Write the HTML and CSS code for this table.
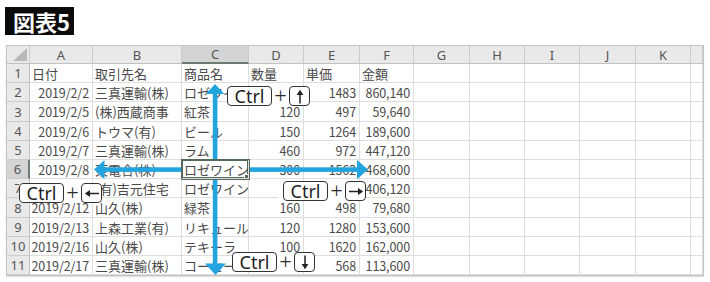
FILE: index.html
```html
<!DOCTYPE html>
<html lang="ja">
<head>
<meta charset="utf-8">
<link rel="stylesheet" href="styles.css">
</head>
<body>
<div class="stage">
  <div class="title">図表5</div>
  <div class="sheet">
    <div class="corner"></div>
    <div class="ch">A</div><div class="ch">B</div><div class="ch selc">C</div><div class="ch">D</div><div class="ch">E</div><div class="ch">F</div><div class="ch">G</div><div class="ch">H</div><div class="ch">I</div><div class="ch">J</div><div class="ch">K</div><div class="ch"></div>

    <div class="rh">1</div><div class="c">日付</div><div class="c">取引先名</div><div class="c">商品名</div><div class="c">数量</div><div class="c">単価</div><div class="c">金額</div><div class="c"></div><div class="c"></div><div class="c"></div><div class="c"></div><div class="c"></div><div class="c"></div>

    <div class="rh">2</div><div class="c n">2019/2/2</div><div class="c">三真運輸(株)</div><div class="c">ロゼワイン</div><div class="c n">580</div><div class="c n">1483</div><div class="c n">860,140</div><div class="c"></div><div class="c"></div><div class="c"></div><div class="c"></div><div class="c"></div><div class="c"></div>

    <div class="rh">3</div><div class="c n">2019/2/5</div><div class="c">(株)西蔵商事</div><div class="c">紅茶</div><div class="c n">120</div><div class="c n">497</div><div class="c n">59,640</div><div class="c"></div><div class="c"></div><div class="c"></div><div class="c"></div><div class="c"></div><div class="c"></div>

    <div class="rh">4</div><div class="c n">2019/2/6</div><div class="c">トウマ(有)</div><div class="c">ビール</div><div class="c n">150</div><div class="c n">1264</div><div class="c n">189,600</div><div class="c"></div><div class="c"></div><div class="c"></div><div class="c"></div><div class="c"></div><div class="c"></div>

    <div class="rh">5</div><div class="c n">2019/2/7</div><div class="c">三真運輸(株)</div><div class="c">ラム</div><div class="c n">460</div><div class="c n">972</div><div class="c n">447,120</div><div class="c"></div><div class="c"></div><div class="c"></div><div class="c"></div><div class="c"></div><div class="c"></div>

    <div class="rh selr">6</div><div class="c n">2019/2/8</div><div class="c">東電合(株)</div><div class="c sel">ロゼワイン</div><div class="c n">300</div><div class="c n">1562</div><div class="c n">468,600</div><div class="c"></div><div class="c"></div><div class="c"></div><div class="c"></div><div class="c"></div><div class="c"></div>

    <div class="rh">7</div><div class="c n">2019/2/9</div><div class="c">(有)吉元住宅</div><div class="c">ロゼワイン</div><div class="c n">520</div><div class="c n">781</div><div class="c n">406,120</div><div class="c"></div><div class="c"></div><div class="c"></div><div class="c"></div><div class="c"></div><div class="c"></div>

    <div class="rh">8</div><div class="c n">2019/2/12</div><div class="c">山久(株)</div><div class="c">緑茶</div><div class="c n">160</div><div class="c n">498</div><div class="c n">79,680</div><div class="c"></div><div class="c"></div><div class="c"></div><div class="c"></div><div class="c"></div><div class="c"></div>

    <div class="rh">9</div><div class="c n">2019/2/13</div><div class="c">上森工業(有)</div><div class="c">リキュール</div><div class="c n">120</div><div class="c n">1280</div><div class="c n">153,600</div><div class="c"></div><div class="c"></div><div class="c"></div><div class="c"></div><div class="c"></div><div class="c"></div>

    <div class="rh">10</div><div class="c n">2019/2/16</div><div class="c">山久(株)</div><div class="c">テキーラ</div><div class="c n">100</div><div class="c n">1620</div><div class="c n">162,000</div><div class="c"></div><div class="c"></div><div class="c"></div><div class="c"></div><div class="c"></div><div class="c"></div>

    <div class="rh">11</div><div class="c n">2019/2/17</div><div class="c">三真運輸(株)</div><div class="c">コーヒー</div><div class="c n">200</div><div class="c n">568</div><div class="c n">113,600</div><div class="c"></div><div class="c"></div><div class="c"></div><div class="c"></div><div class="c"></div><div class="c"></div>
  </div>

  <svg class="arrows" width="710" height="282" viewBox="0 0 710 282">
    <g fill="#22a5de">
      <rect x="212.8" y="92" width="4.6" height="67"/>
      <polygon points="215.1,84 224.3,94 205.9,94"/>
      <rect x="212.8" y="179" width="4.6" height="86"/>
      <polygon points="205,263.5 226,263.5 215.5,275"/>
      <rect x="103" y="167.3" width="78" height="4.6"/>
      <polygon points="94,169.6 104.5,160 104.5,179.2"/>
      <rect x="249" y="167.3" width="109" height="4.6"/>
      <polygon points="368,169.6 357,160 357,179.2"/>
    </g>
  </svg>

  <div class="key k-up">
    <div class="ctrl">Ctrl</div><div class="plus">+</div>
    <div class="ak"><svg width="18" height="17" viewBox="0 0 18 17"><path d="M9 5.5V15.5" stroke="#222" stroke-width="1.5"/><path d="M9 1.8L12.4 7H5.6Z" fill="#222"/></svg></div>
  </div>
  <div class="key k-left">
    <div class="ctrl">Ctrl</div><div class="plus">+</div>
    <div class="ak"><svg width="18" height="17" viewBox="0 0 18 17"><path d="M6 8.5H16" stroke="#222" stroke-width="1.5"/><path d="M1.8 8.5L7 5.1V11.9Z" fill="#222"/></svg></div>
  </div>
  <div class="key k-right">
    <div class="ctrl">Ctrl</div><div class="plus">+</div>
    <div class="ak"><svg width="18" height="17" viewBox="0 0 18 17"><path d="M2 8.5H12" stroke="#222" stroke-width="1.5"/><path d="M16.2 8.5L11 5.1V11.9Z" fill="#222"/></svg></div>
  </div>
  <div class="key k-down">
    <div class="ctrl">Ctrl</div><div class="plus">+</div>
    <div class="ak"><svg width="18" height="17" viewBox="0 0 18 17"><path d="M9 1.5V11.5" stroke="#222" stroke-width="1.5"/><path d="M9 15.2L12.4 10H5.6Z" fill="#222"/></svg></div>
  </div>
</div>
</body>
</html>
```

FILE: styles.css
```css
* { box-sizing: border-box; }
body {
  margin: 0;
  background: #fff;
  font-family: "Noto Sans CJK JP", "Noto Sans", sans-serif;
}
.stage {
  position: relative;
  width: 710px;
  height: 282px;
  overflow: hidden;
  background: #fff;
}
.title {
  margin: 7px 0 0 5px;
  width: 69px;
  height: 28px;
  background: #0b0b0b;
  color: #fff;
  font-weight: 700;
  font-size: 22px;
  line-height: 28px;
  padding-left: 8px;
}
.sheet {
  margin: 10px 0 0 6px;
  width: 698px;
  display: grid;
  grid-template-columns: 23px 63px 89px 67px 55px 56px 54px 56px 55px 55px 56px 55px 12px;
  grid-template-rows: 18px 19px 19px 20px 19px 19px 19px 19px 20px 19px 19px 19px;
  border: 1px solid #c4c4c4;
  box-shadow: 0 1px 1px rgba(0,0,0,0.12);
  font-size: 13px;
  color: #4a4a4a;
}
.c, .ch, .rh, .corner {
  border-right: 1px solid #dedede;
  border-bottom: 1px solid #dedede;
  white-space: nowrap;
  overflow: hidden;
  display: flex;
  align-items: center;
}
.c { padding: 0 3px 0 2px; background: #fff; }
.c.n { justify-content: flex-end; font-size: 12.5px; letter-spacing: -0.1px; }
.ch, .corner {
  background: #e9e9e9;
  border-right-color: #cbcbcb;
  border-bottom-color: #c2c2c2;
  justify-content: center;
  color: #555;
  font-family: "Noto Sans", sans-serif;
  font-size: 13px;
}
.rh {
  background: #e9e9e9;
  border-right-color: #c2c2c2;
  border-bottom-color: #cbcbcb;
  justify-content: center;
  color: #555;
  font-family: "Noto Sans", sans-serif;
  font-size: 13px;
}
.corner { position: relative; }
.corner::after {
  content: "";
  position: absolute;
  right: 2px;
  bottom: 2px;
  width: 0;
  height: 0;
  border-left: 14px solid transparent;
  border-bottom: 13px solid #b9b9b9;
}
.selc {
  background: #d4d4d4;
  border-bottom: 2px solid #6c7d70;
}
.selr {
  background: #d4d4d4;
  border-right: 2px solid #6c7d70;
}
.sel {
  position: relative;
  z-index: 1;
  box-shadow: 0 0 0 1px #55695a, inset 0 0 0 1px #55695a;
}
.sel::after {
  content: "";
  position: absolute;
  right: -3px;
  bottom: -3px;
  width: 5px;
  height: 5px;
  background: #55695a;
  border: 1px solid #fff;
}
.arrows {
  position: absolute;
  left: 0;
  top: 0;
}
.key {
  position: absolute;
  display: flex;
  align-items: center;
  height: 20px;
  background: #fff;
}
.k-up { left: 227px; top: 86px; }
.k-left { left: 19px; top: 183px; }
.k-right { left: 278px; top: 181px; padding-left: 5px; }
.k-down { left: 232px; top: 252px; }
.ctrl {
  width: 45px;
  height: 20px;
  border: 1.3px solid #333;
  border-radius: 4px;
  background: #fff;
  font-family: "Noto Sans", sans-serif;
  font-weight: 400;
  font-size: 18px;
  line-height: 18px;
  color: #1e1e1e;
  display: flex;
  align-items: center;
  justify-content: center;
  padding-bottom: 1px;
}
.plus {
  width: 17px;
  height: 20px;
  display: flex;
  align-items: center;
  justify-content: center;
  font-family: "Noto Sans", sans-serif;
  font-weight: 300;
  font-size: 22px;
  color: #2a2a2a;
  padding-bottom: 2px;
}
.ak {
  width: 21px;
  height: 20px;
  border: 1.3px solid #333;
  border-radius: 4px;
  background: #fff;
  display: flex;
  align-items: center;
  justify-content: center;
}
.ak svg { display: block; }
```
